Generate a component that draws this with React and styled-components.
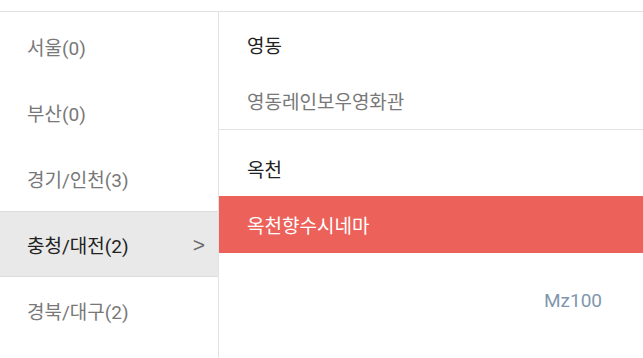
import React from "react";
import styled, { createGlobalStyle } from "styled-components";

const GlobalStyle = createGlobalStyle`
  body {
    margin: 0;
    background: #fff;
    font-family: Roboto, "Noto Sans CJK KR", sans-serif;
  }
`;

const Wrapper = styled.div`
  margin-top: 11px;
  border-top: 1px solid #e2e2e2;
  display: flex;
  height: 346px;
  overflow: hidden;
`;

const RegionList = styled.ul`
  list-style: none;
  margin: 0;
  padding: 1px 0 0;
  width: 218px;
  flex-shrink: 0;
  border-right: 1px solid #e2e2e2;
`;

const Region = styled.li`
  box-sizing: border-box;
  height: 66px;
  padding: 0 13px 0 27px;
  display: flex;
  align-items: center;
  justify-content: space-between;
  font-size: 19px;
  color: ${(p) => (p.$active ? "#222" : "#787878")};
  background: ${(p) => (p.$active ? "#e9e9e9" : "transparent")};
  border-top: 1px solid ${(p) => (p.$active ? "#dedede" : "transparent")};
  border-bottom: 1px solid ${(p) => (p.$active ? "#dedede" : "transparent")};
`;

const Chevron = styled.span`
  font-family: "Liberation Sans", sans-serif;
  font-size: 21px;
  line-height: 1;
  color: #666;
`;

const TheaterPanel = styled.div`
  flex: 1;
  display: flex;
  flex-direction: column;
`;

const Group = styled.div`
  border-top: ${(p) => (p.$first ? "none" : "1px solid #e2e2e2")};
`;

const GroupTitle = styled.div`
  padding: ${(p) => (p.$first ? "22px" : "28px")} 28px 12px;
  line-height: 26px;
  font-size: 19px;
  color: #222;
`;

const Theater = styled.div`
  height: 57px;
  padding: 0 28px;
  display: flex;
  align-items: center;
  font-size: 19px;
  color: ${(p) => (p.$selected ? "#fff" : "#787878")};
  background: ${(p) => (p.$selected ? "#ec625b" : "transparent")};
`;

const Footer = styled.div`
  padding: 35px 41px 0 0;
  line-height: 26px;
  text-align: right;
  font-size: 19px;
  color: #8097ae;
`;

const regions = [
  { name: "서울", count: 0 },
  { name: "부산", count: 0 },
  { name: "경기/인천", count: 3 },
  { name: "충청/대전", count: 2, active: true },
  { name: "경북/대구", count: 2 },
];

const groups = [
  { city: "영동", theaters: [{ name: "영동레인보우영화관" }] },
  { city: "옥천", theaters: [{ name: "옥천향수시네마", selected: true }] },
];

export default function App() {
  return (
    <>
      <GlobalStyle />
      <Wrapper>
        <RegionList>
          {regions.map((r) => (
            <Region key={r.name} $active={r.active}>
              <span>
                {r.name}({r.count})
              </span>
              {r.active && <Chevron>&gt;</Chevron>}
            </Region>
          ))}
        </RegionList>
        <TheaterPanel>
          {groups.map((g, i) => (
            <Group key={g.city} $first={i === 0}>
              <GroupTitle $first={i === 0}>{g.city}</GroupTitle>
              {g.theaters.map((t) => (
                <Theater key={t.name} $selected={t.selected}>
                  {t.name}
                </Theater>
              ))}
            </Group>
          ))}
          <Footer>Mz100</Footer>
        </TheaterPanel>
      </Wrapper>
    </>
  );
}
